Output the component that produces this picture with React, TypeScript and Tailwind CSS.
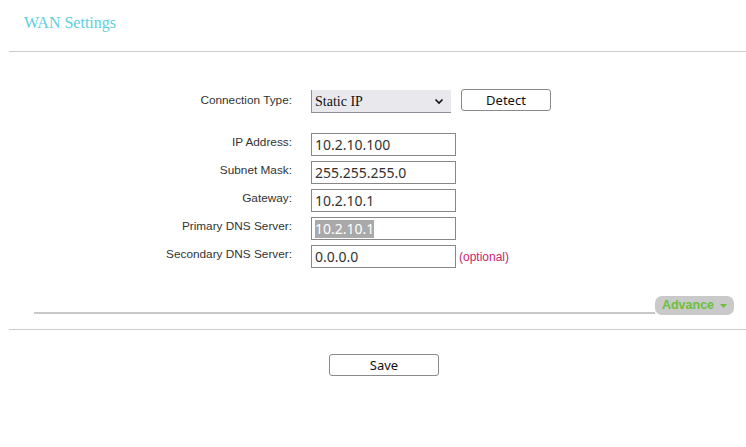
import React from "react";

const fields = [
  { label: "IP Address:", value: "10.2.10.100" },
  { label: "Subnet Mask:", value: "255.255.255.0" },
  { label: "Gateway:", value: "10.2.10.1" },
  { label: "Primary DNS Server:", value: "10.2.10.1", selected: true },
  { label: "Secondary DNS Server:", value: "0.0.0.0", optional: true },
];

const Label = ({ children }: { children: React.ReactNode }) => (
  <div className="w-[292px] shrink-0 pt-[1px] text-right text-[11.8px] leading-[16px] text-[#333]">
    {children}
  </div>
);

export default function App() {
  return (
    <div className="h-[447px] w-[746px] bg-white font-['Liberation_Sans',Arial,sans-serif]">
      <div className="pl-[24px] pt-[13px] font-['Liberation_Serif',serif] text-[16px] leading-[20px] text-[#5bcfdf]">
        WAN Settings
      </div>
      <div className="ml-[9px] mt-[18px] h-px bg-[#cccccc]" />

      <div className="pt-[39px]">
        <div className="flex items-start">
          <Label>Connection Type:</Label>
          <div className="ml-[19px] mt-[-1px] flex h-[23px] w-[140px] items-center justify-between border-b border-l border-[#8f8f9d] bg-[#e9e9ed] pl-[3px] pr-[7px] font-['Liberation_Serif',serif] text-[14px] text-[#111]">
            <span>Static IP</span>
            <svg width="10" height="7" viewBox="0 0 10 7">
              <path d="M1.5 1.5 L5 5 L8.5 1.5" fill="none" stroke="#111" strokeWidth="1.6" />
            </svg>
          </div>
          <button className="ml-[10px] mt-[-2px] h-[22px] w-[90px] rounded-[3px] border border-[#8a8a8a] bg-white font-['Noto_Sans',sans-serif] text-[13px] leading-[20px] text-[#111]">
            Detect
          </button>
        </div>

        <div className="mt-[20px] flex flex-col gap-[5px]">
          {fields.map((f) => (
            <div key={f.label} className="flex items-start">
              <Label>{f.label}</Label>
              <div className="ml-[19px] flex h-[23px] w-[145px] items-center border border-[#888] bg-white px-[3px] font-['Noto_Sans',sans-serif] text-[14px] text-[#333]">
                {f.selected ? (
                  <span className="bg-[#a9a9a9] leading-[18px] text-white">{f.value}</span>
                ) : (
                  <span className="leading-[18px]">{f.value}</span>
                )}
              </div>
              {f.optional && (
                <span className="ml-[3px] mt-[4px] text-[12px] leading-[16px] text-[#c8246c]">(optional)</span>
              )}
            </div>
          ))}
        </div>
      </div>

      <div className="mt-[28px] flex items-end pl-[34px] pr-[12px]">
        <div className="mb-[1px] h-[2px] flex-1 bg-[#c8c8c8]" />
        <div className="flex h-[19px] w-[79px] items-center justify-center gap-[6px] rounded-[7px] bg-[#c9c9c9] text-[12.5px] font-bold text-[#6cbf3a]">
          <span>Advance</span>
          <svg width="7" height="4" viewBox="0 0 7 4">
            <path d="M0 0 L7 0 L3.5 4 Z" fill="#6cbf3a" />
          </svg>
        </div>
      </div>

      <div className="ml-[9px] mt-[14px] h-px bg-[#cccccc]" />

      <div className="flex pl-[329px] pt-[24px]">
        <button className="h-[22px] w-[110px] rounded-[3px] border border-[#8a8a8a] bg-white font-['Noto_Sans',sans-serif] text-[13px] leading-[20px] text-[#111]">
          Save
        </button>
      </div>
    </div>
  );
}
